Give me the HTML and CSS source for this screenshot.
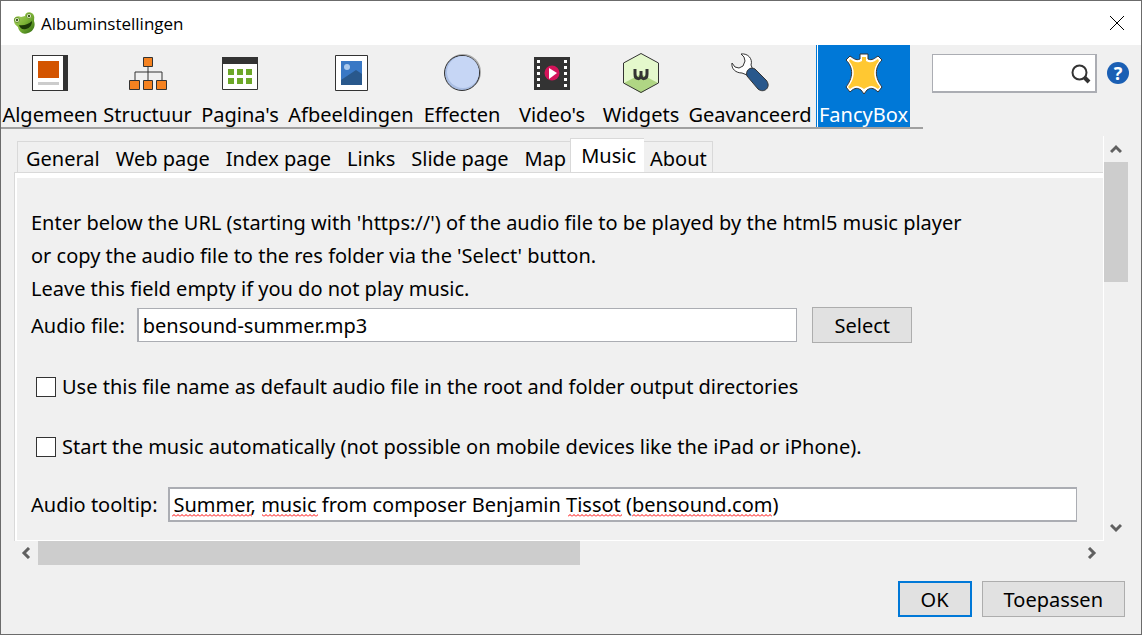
FILE: index.html
```
<!DOCTYPE html>
<html lang="nl">
<head>
  <meta charset="UTF-8">
  <meta name="viewport" content="width=device-width, initial-scale=1.0">
  <title>Albuminstellingen</title>
  <link rel="stylesheet" href="styles.css">
</head>
<body>
  <div class="window">
    <header class="titlebar">
      <svg class="frog" viewBox="0 0 22 22" aria-hidden="true">
        <defs>
          <linearGradient id="skin" x1="0" y1="0" x2="1" y2="1">
            <stop offset="0" stop-color="#b5d66c"/>
            <stop offset="0.5" stop-color="#7db536"/>
            <stop offset="1" stop-color="#2f6a10"/>
          </linearGradient>
        </defs>
        <path d="M1 9C0 5 5 3 8 5L12 4C12 0 17 -1 20 2C22 5 21 6 21 9C23 14 20 20 15 21C10 23 6 20 5 15C3 13 1 12 1 9Z" fill="url(#skin)"/>
        <circle cx="4" cy="8" r="2.600" fill="#e4efc8" stroke="#6b9c30"/>
        <circle cx="16" cy="4" r="2.600" fill="#e4efc8" stroke="#6b9c30"/>
        <circle cx="4" cy="8" r="1.200" fill="#3c5a20"/>
        <circle cx="16" cy="4" r="1.200" fill="#3c5a20"/>
        <path d="M6 13C11 14 16 12 19 9C19 13 17 16 13 17C9 18 7 16 6 13Z" fill="#1c3a08"/>
      </svg>
      <h1>Albuminstellingen</h1>
      <button class="close" type="button" aria-label="Sluiten">
        <svg viewBox="0 0 16 16"><path d="M1 1L15 15M15 1L1 15" stroke="#000" fill="none"/></svg>
      </button>
    </header>

    <div class="top">
      <nav class="toolbar">
        <button type="button">
          <svg viewBox="0 0 40 40">
            <path d="M2 2H38V38H2Z" fill="#333"/>
            <path d="M3 3H33V37H3Z" fill="#fff"/>
            <path d="M8 8H29V25H8Z" fill="#d35400"/>
            <path d="M8 29H29V32H8Z" fill="#ccc"/>
          </svg>
          Algemeen
        </button>
        <button type="button">
          <svg viewBox="0 0 40 40">
            <path d="M20 13V27M7 27V19H34V27" fill="none" stroke="#333"/>
            <g fill="#f58220" stroke="#333">
              <path d="M15.500 4.500H24.500V13.500H15.500Z"/>
              <path d="M1.500 27.500H11.500V36.500H1.500Z"/>
              <path d="M15.500 27.500H24.500V36.500H15.500Z"/>
              <path d="M28.500 27.500H38.500V36.500H28.500Z"/>
            </g>
          </svg>
          Structuur
        </button>
        <button type="button">
          <svg viewBox="0 0 40 40">
            <path d="M2.500 4.500H37.500V36.500H2.500Z" fill="#fff" stroke="#333"/>
            <path d="M2 4H38V11H2Z" fill="#333"/>
            <path d="M8 16h6v6h-6zM17 16h6v6h-6zM26 16h6v6h-6zM8 25h6v6h-6zM17 25h6v6h-6zM26 25h6v6h-6z" fill="#6ca728"/>
          </svg>
          Pagina's
        </button>
        <button type="button">
          <svg viewBox="0 0 40 40">
            <path d="M4.500 2.500H36.500V37.500H4.500Z" fill="#fff" stroke="#333"/>
            <path d="M10 8H31V32H10Z" fill="#3978c5"/>
            <path d="M10 27L25 17L31 21V32H10Z" fill="#29588c"/>
            <circle cx="16" cy="14" r="3" fill="#a9c8ec"/>
          </svg>
          Afbeeldingen
        </button>
        <button type="button">
          <svg viewBox="0 0 40 40">
            <circle cx="21" cy="19" r="18" fill="#aaa"/>
            <circle cx="20" cy="20" r="17.500" fill="#a9bde2" stroke="#333"/>
            <circle cx="21" cy="19" r="16" fill="#c6d6f5"/>
          </svg>
          Effecten
        </button>
        <button type="button">
          <svg viewBox="0 0 40 40">
            <path d="M2 4H38V37H2Z" fill="#333"/>
            <path d="M5 7h3v3h-3zM5 13h3v3h-3zM5 19h3v3h-3zM5 25h3v3h-3zM5 31h3v3h-3zM32 7h3v3h-3zM32 13h3v3h-3zM32 19h3v3h-3zM32 25h3v3h-3zM32 31h3v3h-3z" fill="#fff"/>
            <circle cx="20" cy="20" r="7.500" fill="#d4145a"/>
            <path d="M17 15L25 20L17 26Z" fill="#fff"/>
          </svg>
          Video's
        </button>
        <button type="button">
          <svg viewBox="0 0 40 40">
            <path d="M20 0.500L37.500 10V30L20 40L2.500 30V10Z" fill="#e4f8cc"/>
            <path d="M3 30L20 21L37 30L20 40Z" fill="#b0d684"/>
            <path d="M20 0.500L37.500 10V30L20 39.500L2.500 30V10Z" fill="none" stroke="#333"/>
            <path d="M14 16V21C14 27 20 27 20 22V18V22C20 27 26 27 26 21V16" fill="none" stroke="#333" stroke-width="3"/>
          </svg>
          Widgets
        </button>
        <button type="button">
          <svg viewBox="0 0 40 40">
            <path d="M11 1C18 0 23 6 21 12L23 17L17 22L12 20C6 20 1 16 2 10L5 14L9 15L13 13L15 8L14 4Z" fill="#fff" stroke="#333"/>
            <path d="M17 23C15 18 20 13 25 16L36 27C42 34 34 41 28 36Z" fill="#29588c" stroke="#333"/>
          </svg>
          Geavanceerd
        </button>
        <button type="button" class="active">
          <svg viewBox="0 0 40 40">
            <path d="M16 1H24V6C28 8 31 5 34 3L38 7C30 15 31 25 38 34L34 39C29 34 26 35 23 37L20 41L17 37C14 35 11 34 6 39L2 34C9 25 10 15 2 7L6 3C9 5 12 8 16 6Z" fill="#fff" stroke="#333"/>
            <path d="M18 4H22V8C27 11 31 8 34 6L35 8C28 16 29 26 36 34L34 36C28 31 25 33 20 36C15 33 12 31 6 36L4 34C11 26 12 16 5 8L6 6C9 8 13 11 18 8Z" fill="#ffc832"/>
          </svg>
          FancyBox
        </button>
      </nav>
      <div class="search">
        <input type="text" aria-label="Zoeken">
        <svg viewBox="0 0 20 20"><circle cx="8.500" cy="8.500" r="7" fill="none" stroke="#333" stroke-width="2"/><path d="M13 13L18 18" stroke="#333" stroke-width="4"/></svg>
      </div>
      <button class="help" type="button" aria-label="Help">?</button>
    </div>

    <main class="scroller">
      <div class="view">
        <div class="tabs" role="tablist">
          <button type="button" role="tab">General</button>
          <button type="button" role="tab">Web page</button>
          <button type="button" role="tab">Index page</button>
          <button type="button" role="tab">Links</button>
          <button type="button" role="tab">Slide page</button>
          <button type="button" role="tab">Map</button>
          <button type="button" role="tab" class="current" aria-selected="true">Music</button>
          <button type="button" role="tab">About</button>
        </div>
        <form class="pane">
          <p>Enter below the URL (starting with 'https://') of the audio file to be played by the html5 music player<br>
          or copy the audio file to the res folder via the 'Select' button.<br>
          Leave this field empty if you do not play music.</p>
          <div class="row file-row">
            <label for="audioFile">Audio file:</label>
            <input type="text" id="audioFile" value="bensound-summer.mp3">
            <button type="button" class="btn">Select</button>
          </div>
          <div class="check">
            <input type="checkbox" id="useDefault">
            <label for="useDefault">Use this file name as default audio file in the root and folder output directories</label>
          </div>
          <div class="check">
            <input type="checkbox" id="autoStart">
            <label for="autoStart">Start the music automatically (not possible on mobile devices like the iPad or iPhone).</label>
          </div>
          <div class="row tip-row">
            <label for="audioTip">Audio tooltip:</label>
            <div class="spell">
              <input type="text" id="audioTip" spellcheck="false" value="Summer, music from composer Benjamin Tissot (bensound.com)">
              <svg class="marks" aria-hidden="true">
                <defs>
                  <pattern id="wave" width="4" height="3" patternUnits="userSpaceOnUse">
                    <path d="M0 2.500L2 0.500L4 2.500" fill="none" stroke="#f00"/>
                  </pattern>
                </defs>
                <g fill="url(#wave)">
                  <rect x="4" width="80" height="3"/>
                  <rect x="94" width="56" height="3"/>
                  <rect x="400" width="54" height="3"/>
                  <rect x="464" width="140" height="3"/>
                </g>
              </svg>
            </div>
          </div>
        </form>
      </div>
      <div class="vbar">
        <svg viewBox="0 0 12 12"><path d="M1 9L6 4L11 9" fill="none" stroke="#606060" stroke-width="3"/></svg>
        <div class="track"><div class="thumb"></div></div>
        <svg viewBox="0 0 12 12"><path d="M1 3L6 8L11 3" fill="none" stroke="#606060" stroke-width="3"/></svg>
      </div>
      <div class="hbar">
        <svg viewBox="0 0 12 12"><path d="M9 1L4 6L9 11" fill="none" stroke="#606060" stroke-width="3"/></svg>
        <div class="track"><div class="thumb"></div></div>
        <svg viewBox="0 0 12 12"><path d="M3 1L8 6L3 11" fill="none" stroke="#606060" stroke-width="3"/></svg>
      </div>
    </main>

    <footer class="actions">
      <button type="button" class="btn ok">OK</button>
      <button type="button" class="btn">Toepassen</button>
    </footer>
  </div>
</body>
</html>
```
FILE: styles.css
```
* { box-sizing: border-box; }
body { margin: 0; font-family: "Noto Sans", sans-serif; font-size: 20px; line-height: 33px; color: #000; }
button, input { font: inherit; color: inherit; margin: 0; padding: 0; }
button { background: none; border: none; white-space: nowrap; }
svg { display: block; flex: none; }

.window { min-height: 100vh; display: flex; flex-direction: column; background: #f0f0f0; border: 1px solid #6b6b6b; }

/* title bar */
.titlebar { display: flex; align-items: center; height: 44px; padding: 0 16px 0 12px; background: #fff; }
.titlebar h1 { flex: 1; margin: 0 0 0 6px; font-family: "Open Sans", sans-serif; font-size: 17px; font-weight: normal; }
.frog { width: 22px; height: 22px; }
.close svg { width: 16px; height: 16px; }

/* toolbar */
.top { display: flex; align-items: flex-start; height: 91px; }
.toolbar { display: grid; grid-template-columns: 98px 97px 88px 134px 88px 92px 86px 132px 94px; padding-right: 13px; border-bottom: 2px solid #a0a0a0; }
.toolbar button { display: flex; flex-direction: column; align-items: center; justify-content: space-between; height: 82px; padding-top: 8px; line-height: 25px; }
.toolbar svg { width: 40px; height: 40px; overflow: visible; }
.toolbar .active { background: #0078d7; color: #fff; border-left: 1px solid #0078d7; box-shadow: inset 1px 0 #fff; }
.search { position: relative; flex: 1; height: 39px; margin: 9px 10px 0 9px; }
.search input { width: 100%; height: 39px; padding: 0 34px 0 4px; background: #fff; border: 1px solid #abadb3; border-width: 1px 2px 2px 1px; }
.search svg { position: absolute; right: 6px; top: 10px; width: 20px; height: 20px; }
.help { width: 22px; height: 22px; margin: 17px 12px 0 0; border-radius: 50%; background: #1a5fb4; color: #fff; font-size: 18px; font-weight: bold; line-height: 22px; }

/* scroll area */
.scroller { flex: 1; display: grid; grid-template-columns: 1fr 24px; grid-template-rows: 1fr 24px; margin: 0 13px; }
.view { display: flex; flex-direction: column; padding-top: 2px; border-right: 1px solid #fff; }
.tabs { display: flex; align-items: flex-end; padding-left: 3px; }
.tabs button { height: 31px; padding: 0 8px; border-top: 1px solid #d9d9d9; }
.tabs button:first-child { border-left: 1px solid #d9d9d9; }
.tabs button:last-child { border-right: 1px solid #d9d9d9; padding-right: 5px; }
.tabs .current { position: relative; height: 34px; margin: 0 -2px 0 -4px; padding: 0 8px 0 10px; background: #fff; border-left: 1px solid #d9d9d9; }
.pane { flex: 1; padding: 27px 26px 0 16px; border: 1px solid #d9d9d9; border-width: 1px 0 0 1px; box-shadow: inset 2px 5px #fff, inset 0 -1px #fff; }
.pane p { margin: 6px 0 2px; }

.row { display: flex; align-items: center; }
.row label { flex: none; }
.row input { width: 100%; height: 34px; padding: 0 4px; background: #fff; border: 1px solid #abadb3; }
.file-row { margin-right: 165px; }
.file-row input { flex: 1; margin: 0 15px 0 12px; border-left-width: 2px; }
.check { display: flex; align-items: center; height: 33px; margin-top: 27px; padding-left: 5px; gap: 6px; }
.check input { appearance: none; width: 20px; height: 20px; background: #fff; border: 1px solid #333; }
.check input:checked { background: #333; }
.tip-row { margin-top: 24px; }
.spell { position: relative; flex: 1; margin-left: 10px; }
.spell input { display: block; height: 35px; border-width: 2px 1px 2px 2px; }
.marks { position: absolute; left: 0; top: 27px; width: 100%; height: 3px; }

/* scroll bars */
.vbar, .hbar { display: flex; align-items: center; justify-content: center; }
.vbar { flex-direction: column; }
.vbar > svg, .hbar > svg { width: 12px; height: 12px; margin: 7px 6px; }
.track { flex: 1; display: flex; align-self: stretch; }
.vbar .thumb { width: 24px; height: 34%; background: #cdcdcd; }
.hbar .thumb { width: 52%; background: #cdcdcd; }

.btn { height: 36px; padding: 0 21px; background: #e1e1e1; border: 1px solid #adadad; }
.btn.ok { border: 2px solid #0078d7; }
.actions { display: flex; justify-content: flex-end; gap: 10px; padding: 16px 16px 17px; }
```
